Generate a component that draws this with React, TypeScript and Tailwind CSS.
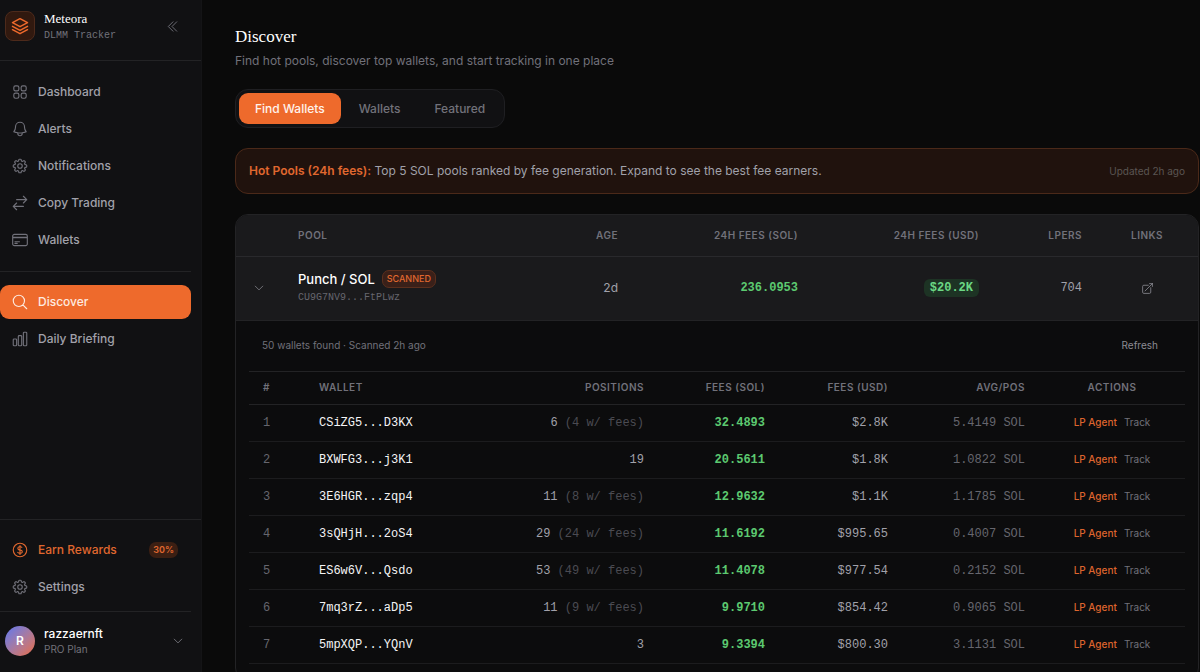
import type { ReactNode } from "react";
import type { IconType } from "react-icons";
import {
  HiOutlineArrowTopRightOnSquare,
  HiOutlineArrowsRightLeft,
  HiOutlineBell,
  HiOutlineChartBar,
  HiOutlineChevronDoubleLeft,
  HiOutlineChevronDown,
  HiOutlineCog8Tooth,
  HiOutlineCreditCard,
  HiOutlineCurrencyDollar,
  HiOutlineMagnifyingGlass,
  HiOutlineSquares2X2,
} from "react-icons/hi2";

const MONO = "font-['Liberation_Mono',monospace]";
const SERIF = "font-['Liberation_Serif',serif]";

type Wallet = {
  address: string;
  positions: string;
  withFees?: string;
  sol: string;
  usd: string;
  avg: string;
};

const wallets: Wallet[] = [
  { address: "CSiZG5...D3KX", positions: "6", withFees: "4", sol: "32.4893", usd: "$2.8K", avg: "5.4149" },
  { address: "BXWFG3...j3K1", positions: "19", sol: "20.5611", usd: "$1.8K", avg: "1.0822" },
  { address: "3E6HGR...zqp4", positions: "11", withFees: "8", sol: "12.9632", usd: "$1.1K", avg: "1.1785" },
  { address: "3sQHjH...2oS4", positions: "29", withFees: "24", sol: "11.6192", usd: "$995.65", avg: "0.4007" },
  { address: "ES6w6V...Qsdo", positions: "53", withFees: "49", sol: "11.4078", usd: "$977.54", avg: "0.2152" },
  { address: "7mq3rZ...aDp5", positions: "11", withFees: "9", sol: "9.9710", usd: "$854.42", avg: "0.9065" },
  { address: "5mpXQP...YQnV", positions: "3", sol: "9.3394", usd: "$800.30", avg: "3.1131" },
];

type NavItemProps = {
  icon: IconType;
  label: string;
  tone?: "default" | "active" | "accent";
  children?: ReactNode;
};

const tones = {
  default: { row: "text-[#a1a1aa]", icon: "text-[#71717a]" },
  active: { row: "bg-[#ee6a2c] text-[#fdebe0]", icon: "text-[#fdebe0]" },
  accent: { row: "text-[#e0682f]", icon: "text-[#e0682f]" },
};

function StackLogo() {
  return (
    <svg
      viewBox="0 0 24 24"
      className="size-[20px]"
      fill="none"
      stroke="currentColor"
      strokeWidth="1.8"
      strokeLinecap="round"
      strokeLinejoin="round"
      aria-hidden="true"
    >
      <path d="M12 3.2 21 8l-9 4.8L3 8z" />
      <path d="m3 12.4 9 4.8 9-4.8" />
      <path d="m3 16.4 9 4.8 9-4.8" />
    </svg>
  );
}

function NavItem({ icon: Icon, label, tone = "default", children }: NavItemProps) {
  return (
    <a
      href="#"
      className={`flex h-[34px] items-center gap-[9px] rounded-[9px] pr-[13px] pl-[11px] text-[12px] font-medium ${tones[tone].row}`}
    >
      <Icon className={`size-[18px] shrink-0 ${tones[tone].icon}`} />
      <span className="flex-1">{label}</span>
      {children}
    </a>
  );
}

function Sidebar() {
  return (
    <aside className="flex w-[202px] shrink-0 flex-col border-r border-[#141416] bg-[#111113]">
      <div className="flex h-[61px] shrink-0 items-start gap-[9px] border-b border-[#232325] pt-[11px] pr-[21px] pl-[5px]">
        <div className="flex size-[30px] items-center justify-center rounded-[8px] border border-[#4d2a1b] bg-[#31190f] text-[#ee6a2c]">
          <StackLogo />
        </div>
        <div className="flex-1">
          <div className={`${SERIF} text-[13px] leading-[16px] text-white`}>Meteora</div>
          <div className={`${MONO} text-[10px] leading-[18px] text-[#71717a]`}>DLMM Tracker</div>
        </div>
        <button type="button" aria-label="Collapse sidebar" className="mt-[8px] text-[#71717a]">
          <HiOutlineChevronDoubleLeft className="size-[15px]" />
        </button>
      </div>

      <nav className="flex flex-1 flex-col gap-[3px] pt-[14px] pr-[10px]">
        <NavItem icon={HiOutlineSquares2X2} label="Dashboard" />
        <NavItem icon={HiOutlineBell} label="Alerts" />
        <NavItem icon={HiOutlineCog8Tooth} label="Notifications" />
        <NavItem icon={HiOutlineArrowsRightLeft} label="Copy Trading" />
        <NavItem icon={HiOutlineCreditCard} label="Wallets" />
        <hr className="mt-[11px] mb-[10px] border-[#232325]" />
        <NavItem icon={HiOutlineMagnifyingGlass} label="Discover" tone="active" />
        <NavItem icon={HiOutlineChartBar} label="Daily Briefing" />
      </nav>

      <div className="border-t border-[#232325] pt-[13px]">
        <div className="mr-[10px] flex flex-col gap-[3px] border-b border-[#232325] pb-[7px]">
          <NavItem icon={HiOutlineCurrencyDollar} label="Earn Rewards" tone="accent">
            <span className="rounded-[7px] bg-[#3b1f13] px-[4px] text-[9px] leading-[16px] font-semibold">30%</span>
          </NavItem>
          <NavItem icon={HiOutlineCog8Tooth} label="Settings" />
        </div>
        <button type="button" className="flex w-full items-center gap-[9px] pt-[14px] pr-[17px] pb-[16px] pl-[5px] text-left">
          <span className="flex size-[30px] items-center justify-center rounded-full bg-linear-to-br from-[#5b74f0] to-[#e8683a] text-[12px] font-semibold text-white">
            R
          </span>
          <span className="flex flex-1 flex-col">
            <span className="text-[12px] leading-[16px] font-medium text-white">razzaernft</span>
            <span className="text-[10px] leading-[14px] text-[#71717a]">PRO Plan</span>
          </span>
          <HiOutlineChevronDown className="size-[12px] text-[#8b8b93]" />
        </button>
      </div>
    </aside>
  );
}

function WalletTable() {
  const head = "px-[14px] font-semibold";
  return (
    <table className="w-full table-fixed border-t border-[#232325] text-right">
      <colgroup>
        <col className="w-[56px]" />
        <col />
        <col className="w-[200px]" />
        <col className="w-[121px]" />
        <col className="w-[123px]" />
        <col className="w-[137px]" />
        <col className="w-[146px]" />
      </colgroup>
      <thead>
        <tr className="h-[33px] border-b border-[#232325] text-[10px] tracking-wider text-[#71717a]">
          <th className={`${head} text-left`}>#</th>
          <th className={`${head} text-left`}>WALLET</th>
          <th className={head}>POSITIONS</th>
          <th className={head}>FEES (SOL)</th>
          <th className={head}>FEES (USD)</th>
          <th className={head}>AVG/POS</th>
          <th className={`${head} text-center`}>ACTIONS</th>
        </tr>
      </thead>
      <tbody>
        {wallets.map((w, i) => (
          <tr key={w.address} className={`${MONO} h-[37px] border-b border-[#1c1c1e] text-[12px] text-[#a1a1aa]`}>
            <td className="px-[14px] text-left text-[#66666e]">{i + 1}</td>
            <td className="px-[14px] text-left text-[#f4f4f5]">{w.address}</td>
            <td className="px-[14px]">
              {w.positions}
              {w.withFees && <span className="text-[#4b4b52]"> ({w.withFees} w/ fees)</span>}
            </td>
            <td className="px-[14px] font-bold text-[#5cc970]">{w.sol}</td>
            <td className="px-[14px]">{w.usd}</td>
            <td className="px-[14px] text-[#66666e]">{w.avg} SOL</td>
            <td className="px-[14px] font-['Inter',sans-serif] text-[10px]">
              <div className="flex justify-center gap-[7px]">
                <a href="#" className="font-medium text-[#dd642d]">LP Agent</a>
                <button type="button" className="text-[#71717a]">Track</button>
              </div>
            </td>
          </tr>
        ))}
      </tbody>
    </table>
  );
}

function PoolTable() {
  const cell = "px-[14px]";
  return (
    <section className="overflow-hidden rounded-[13px] border border-[#232325] bg-[#0c0c0d]">
      <table className="w-full table-fixed text-right">
        <colgroup>
          <col className="w-[48px]" />
          <col />
          <col className="w-[80px]" />
          <col className="w-[180px]" />
          <col className="w-[181px]" />
          <col className="w-[103px]" />
          <col className="w-[102px]" />
        </colgroup>
        <thead>
          <tr className="h-[41px] border-b border-[#29292c] bg-[#1a1a1c] text-[10px] tracking-wider text-[#71717a]">
            <th aria-label="Expand" />
            <th className={`${cell} text-left font-semibold`}>POOL</th>
            <th className={`${cell} font-semibold`}>AGE</th>
            <th className={`${cell} font-semibold`}>24H FEES (SOL)</th>
            <th className={`${cell} font-semibold`}>24H FEES (USD)</th>
            <th className={`${cell} font-semibold`}>LPERS</th>
            <th className={`${cell} text-center font-semibold`}>LINKS</th>
          </tr>
        </thead>
        <tbody>
          <tr className={`${MONO} h-[64px] border-b border-[#232325] bg-[#1a1a1c] text-[12px] text-[#a1a1aa]`}>
            <td>
              <button type="button" aria-label="Collapse pool" className="mr-[19px] ml-auto block text-[#8b8b93]">
                <HiOutlineChevronDown className="size-[12px]" />
              </button>
            </td>
            <td className={`${cell} text-left`}>
              <div className="flex items-center gap-[7px] font-['Inter',sans-serif]">
                <span className="text-[13px] leading-[20px] font-medium text-white">Punch / SOL</span>
                <span className="rounded-[7px] border border-[#5c2f1d] bg-[#3a2019] px-[4px] text-[9px] leading-[16px] font-medium text-[#e0682f]">
                  SCANNED
                </span>
              </div>
              <div className="text-[10px] leading-[18px] text-[#66666e]">CU9G7NV9...FtPLwz</div>
            </td>
            <td className={`${cell} font-['Inter',sans-serif]`}>2d</td>
            <td className={`${cell} font-bold text-[#5cc970]`}>236.0953</td>
            <td className={cell}>
              <span className="inline-block rounded-[6px] bg-[#1d3324] px-[6px] leading-[18px] font-bold text-[#6bd884]">
                $20.2K
              </span>
            </td>
            <td className={cell}>704</td>
            <td className={cell}>
              <a href="#" aria-label="Open pool" className="flex justify-center text-[#8b8b93]">
                <HiOutlineArrowTopRightOnSquare className="size-[13px]" />
              </a>
            </td>
          </tr>
          <tr>
            <td colSpan={7} className="px-[13px] pb-[16px]">
              <div className="flex h-[50px] items-center justify-between pr-[27px] pl-[13px] text-[10px] text-[#71717a]">
                <span>50 wallets found · Scanned 2h ago</span>
                <button type="button" className="text-[#8b8b93]">Refresh</button>
              </div>
              <WalletTable />
            </td>
          </tr>
        </tbody>
      </table>
    </section>
  );
}

export default function App() {
  return (
    <div className="flex h-screen overflow-hidden bg-[#0a0a0a] font-['Inter',sans-serif]">
      <Sidebar />
      <main className="min-w-0 flex-1 pt-[25px] pr-px pl-[33px]">
        <h1 className={`${SERIF} text-[17px] leading-[24px] text-white`}>Discover</h1>
        <p className="mt-[3px] text-[12px] leading-[18px] text-[#71717a]">
          Find hot pools, discover top wallets, and start tracking in one place
        </p>

        <div role="tablist" className="mt-[19px] flex w-fit rounded-[13px] border border-[#1f1f22] bg-[#111113] p-[3px] text-[12px] font-medium">
          <button type="button" role="tab" aria-selected="true" className="h-[31px] rounded-[9px] bg-[#ee6a2c] px-[16px] text-[#fff3ec]">
            Find Wallets
          </button>
          <button type="button" role="tab" aria-selected="false" className="h-[31px] px-[18px] text-[#71717a]">
            Wallets
          </button>
          <button type="button" role="tab" aria-selected="false" className="h-[31px] px-[16px] text-[#71717a]">
            Featured
          </button>
        </div>

        <div className="mt-[20px] mb-[20px] flex h-[46px] items-center justify-between rounded-[13px] border border-[#4b2919] bg-[#20120d] px-[13px]">
          <p className="text-[12px] text-[#a1a1aa]">
            <strong className="font-semibold text-[#e0682f]">Hot Pools (24h fees):</strong> Top 5 SOL pools ranked by fee
            generation. Expand to see the best fee earners.
          </p>
          <span className="text-[10px] text-[#5b5552]">Updated 2h ago</span>
        </div>

        <PoolTable />
      </main>
    </div>
  );
}
